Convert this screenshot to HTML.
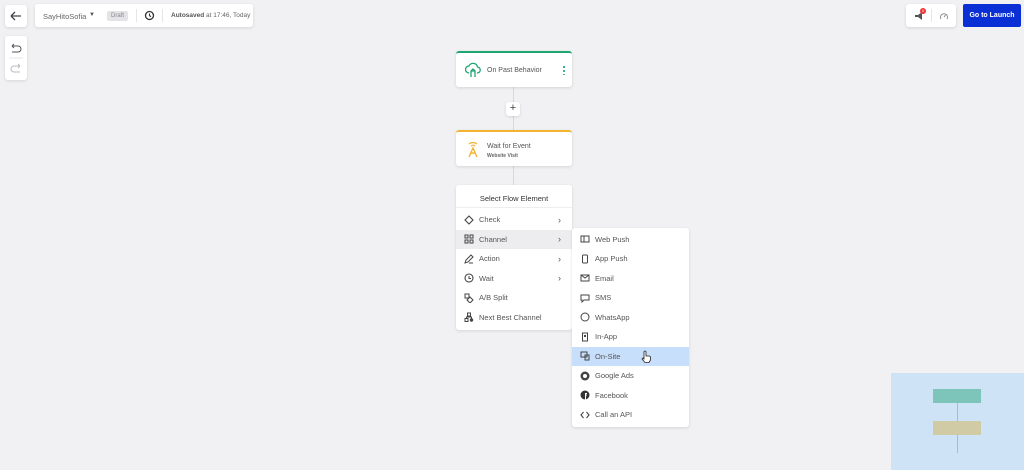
<!DOCTYPE html>
<html><head><style>
*{margin:0;padding:0;box-sizing:border-box}
body{width:1024px;height:470px;background:#f1f1f3;font-family:"Liberation Sans",sans-serif;position:relative;overflow:hidden;color:#444}
.card{position:absolute;background:#fff;border-radius:3px;box-shadow:0 1px 3px rgba(0,0,0,.12)}
.t{position:absolute;font-size:7px;white-space:nowrap}
.row{position:absolute;left:0;right:0;height:19.4px;display:flex;align-items:center;font-size:7.5px;color:#555}
.row svg{margin:0 5px 0 8px}
.chev{position:absolute;right:11px;font-size:9px;color:#555}
</style></head><body>
<div class="card" style="left:5px;top:5px;width:22px;height:22px"><svg width="22" height="22"><path d="M6 11h10M6 11l4-4M6 11l4 4" stroke="#444" stroke-width="1.3" fill="none"/></svg></div>
<div class="card" style="left:35px;top:4px;width:218px;height:23px">
<span class="t" style="left:8px;top:8px;color:#666;font-size:7.5px">SayHitoSofia</span>
<span class="t" style="left:54px;top:8px;font-size:6px;color:#555">▼</span>
<span style="position:absolute;left:72px;top:7px;width:21px;height:10px;background:#e3e3e8;border-radius:2px;font-size:6px;color:#888;text-align:center;line-height:10px">Draft</span>
<div style="position:absolute;left:101px;top:5px;width:1px;height:13px;background:#e5e5e5"></div>
<svg style="position:absolute;left:109px;top:6px" width="11" height="11"><circle cx="5.5" cy="5.5" r="4" stroke="#333" stroke-width="1.3" fill="none"/><path d="M5.5 3.5v2.2l1.5 1" stroke="#333" stroke-width="1.1" fill="none"/></svg>
<div style="position:absolute;left:127px;top:5px;width:1px;height:13px;background:#e5e5e5"></div>
<span class="t" style="left:136px;top:8px;font-size:6.5px;color:#666"><b style="color:#555">Autosaved</b> at 17:46, Today</span>
</div>
<div class="card" style="left:5px;top:36px;width:22px;height:44px">
<svg width="22" height="44"><path d="M7 10h6a3 3 0 0 1 0 6H7M7 10l2-2M7 10l2 2" stroke="#555" stroke-width="1" fill="none"/><line x1="4" y1="22" x2="18" y2="22" stroke="#e5e5e5"/><path d="M15 30H9a3 3 0 0 0 0 6h6M15 30l-2-2M15 30l-2 2" stroke="#bbb" stroke-width="1" fill="none"/></svg></div>
<div class="card" style="left:906px;top:4px;width:50px;height:23px">
<svg style="position:absolute;left:8px;top:7px" width="12" height="10"><path d="M1 4h3l4-3v8L4 6H1z" fill="#555"/></svg>
<span style="position:absolute;left:14px;top:4px;width:6px;height:6px;border-radius:3px;background:#e33;font-size:4px;color:#fff;text-align:center;line-height:6px">0</span>
<div style="position:absolute;left:25px;top:5px;width:1px;height:13px;background:#e5e5e5"></div>
<svg style="position:absolute;left:33px;top:7px" width="10" height="10"><path d="M2 8A3.5 3.5 0 1 1 8 8" stroke="#888" fill="none"/><path d="M5 6l1.5-2" stroke="#888"/></svg>
</div>
<div style="position:absolute;left:963px;top:4px;width:58px;height:23px;background:#0a2fd4;border-radius:2px;color:#fff;font-size:7px;font-weight:bold;text-align:center;line-height:23px">Go to Launch</div>

<div style="position:absolute;left:513px;top:87px;width:1px;height:98px;background:#d8d8dc"></div>
<div class="card" style="left:506px;top:102px;width:14px;height:14px;text-align:center;line-height:13px;font-size:11px;color:#444">+</div>
<div class="card" style="left:456px;top:51px;width:116px;height:36px;border-top:2px solid #1ea672">
<svg style="position:absolute;left:9px;top:9px" width="16" height="16"><path d="M4 11a3.5 3.5 0 0 1 0-7 4.5 4.5 0 0 1 8.5 1A3 3 0 0 1 12 11" stroke="#1ea672" stroke-width="1.3" fill="none"/><path d="M6 15V9h4v6M6 9l2-2 2 2" stroke="#1ea672" stroke-width="1.3" fill="none"/></svg>
<span class="t" style="left:31px;top:14px;color:#555">On Past Behavior</span>
<div style="position:absolute;left:107px;top:12px;width:2px;height:10px;background:radial-gradient(circle,#1ea672 1px,transparent 1.1px) 0 0/2px 4px"></div>
</div>
<div class="card" style="left:456px;top:130px;width:116px;height:36px;border-top:2px solid #f2b431">
<svg style="position:absolute;left:10px;top:8px" width="14" height="18"><path d="M3 4a6 6 0 0 1 8 0M5 6a3 3 0 0 1 4 0" stroke="#f2b431" stroke-width="1.2" fill="none"/><path d="M3 17L7 8l4 9M4.5 13h5" stroke="#f2b431" stroke-width="1.4" fill="none"/></svg>
<span class="t" style="left:31px;top:11px;color:#555">Wait for Event</span>
<span class="t" style="left:31px;top:21px;font-size:5px;color:#666;font-weight:bold">Website Visit</span>
</div>

<div class="card" style="left:456px;top:185px;width:116px;height:145px">
<span class="t" style="left:0;right:0;top:9px;text-align:center;font-size:7.5px;color:#333">Select Flow Element</span>
<div style="position:absolute;left:0;right:0;top:22px;height:1px;background:#eee"></div>
<div class="row" style="top:25px"><svg width="10" height="10"><path d="M5 1l4 4-4 4-4-4z" stroke="#444" stroke-width="1.1" fill="none"/></svg>Check<span class="chev">›</span></div>
<div class="row" style="top:44.5px;background:#ededf0"><svg width="10" height="10"><g stroke="#444" fill="none"><rect x="1" y="1" width="3" height="3"/><rect x="6" y="1" width="3" height="3"/><rect x="1" y="6" width="3" height="3"/><rect x="6" y="6" width="3" height="3"/></g></svg>Channel<span class="chev">›</span></div>
<div class="row" style="top:64px"><svg width="10" height="10"><path d="M1 9l1-3 5-5 2 2-5 5zM5 9h4" stroke="#444" fill="none"/></svg>Action<span class="chev">›</span></div>
<div class="row" style="top:83.5px"><svg width="10" height="10"><circle cx="5" cy="5" r="4" stroke="#444" stroke-width="1.1" fill="none"/><path d="M5 3v2.5h2" stroke="#444" fill="none"/></svg>Wait<span class="chev">›</span></div>
<div class="row" style="top:103px"><svg width="10" height="10"><g stroke="#444" fill="none"><rect x="1" y="1" width="4" height="4"/><path d="M6 4l3 3-3 3-3-3z"/></g></svg>A/B Split</div>
<div class="row" style="top:122.5px"><svg width="10" height="10"><g stroke="#444" fill="none"><rect x="3.5" y="1" width="3" height="3"/><rect x="1" y="6.5" width="3" height="3"/><path d="M2.5 6.5V5h5v1.5"/></g><circle cx="7.5" cy="8" r="1.7" fill="#444"/></svg>Next Best Channel</div>
</div>

<div class="card" style="left:572px;top:228px;width:117px;height:199px">
<div class="row" style="top:1.5px"><svg width="10" height="10"><rect x="1" y="2" width="8" height="6" stroke="#444" fill="none"/><path d="M4 2v6" stroke="#444"/></svg>Web Push</div>
<div class="row" style="top:21px"><svg width="10" height="10"><rect x="2.5" y="1" width="5" height="8" rx="1" stroke="#444" fill="none"/></svg>App Push</div>
<div class="row" style="top:40.5px"><svg width="10" height="10"><rect x="1" y="2" width="8" height="6" stroke="#444" fill="none"/><path d="M1 2l4 3 4-3" stroke="#444" fill="none"/></svg>Email</div>
<div class="row" style="top:60px"><svg width="10" height="10"><path d="M1 2h8v5H4L2 9V7H1z" stroke="#444" fill="none"/></svg>SMS</div>
<div class="row" style="top:79.5px"><svg width="10" height="10"><circle cx="5" cy="5" r="4" stroke="#444" fill="none"/></svg>WhatsApp</div>
<div class="row" style="top:99px"><svg width="10" height="10"><rect x="2.5" y="1" width="5" height="8" stroke="#444" fill="none"/><rect x="4" y="3" width="2" height="2" fill="#444"/></svg>In-App</div>
<div class="row" style="top:118.5px;background:#c7dffa"><svg width="10" height="10"><g stroke="#444" fill="none"><rect x="1" y="1" width="6" height="5"/><rect x="5" y="4" width="4" height="5"/></g></svg>On-Site
<svg style="position:absolute;left:69px;top:3px;margin:0" width="10" height="13"><path d="M3 7V2a1 1 0 0 1 2 0v4h3a1.5 1.5 0 0 1 1.5 1.5V10l-1.5 2.5H4L1 9l1-1 1 1z" fill="#fff" stroke="#222" stroke-width=".8"/></svg></div>
<div class="row" style="top:138px"><svg width="10" height="10"><circle cx="5" cy="5" r="4.5" fill="#444"/><circle cx="5" cy="5" r="2" fill="#fff"/></svg>Google Ads</div>
<div class="row" style="top:157.5px"><svg width="10" height="10"><circle cx="5" cy="5" r="4.5" fill="#333"/><path d="M5.5 9.5V5h1.5M5.5 5V3.5h1.5" stroke="#fff" fill="none"/></svg>Facebook</div>
<div class="row" style="top:177px"><svg width="10" height="10"><path d="M3.5 2L1 5l2.5 3M6.5 2L9 5 6.5 8" stroke="#444" stroke-width="1.1" fill="none"/></svg>Call an API</div>
</div>

<div style="position:absolute;left:891px;top:373px;width:133px;height:97px;background:#cfe3f7">
<div style="position:absolute;left:66px;top:30px;width:1px;height:50px;background:#a9bccf"></div>
<div style="position:absolute;left:42px;top:16px;width:48px;height:14px;background:#7dc5bb"></div>
<div style="position:absolute;left:42px;top:48px;width:48px;height:14px;background:#d1cba5"></div>
</div>
</body></html>
